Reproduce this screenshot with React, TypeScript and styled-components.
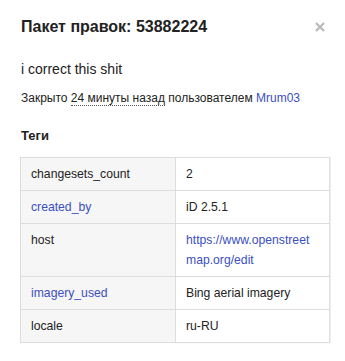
import { FC } from "react";
import styled, { createGlobalStyle } from "styled-components";

const GlobalStyle = createGlobalStyle`
  html, body {
    margin: 0;
    padding: 0;
    background: #fff;
  }
  body {
    font-family: "Liberation Sans", Arial, sans-serif;
    color: #222;
  }
`;

const tags: { key: string; value: string; keyLink?: boolean; valueLink?: boolean }[] = [
  { key: "changesets_count", value: "2" },
  { key: "created_by", value: "iD 2.5.1", keyLink: true },
  { key: "host", value: "https://www.openstreetmap.org/edit", valueLink: true },
  { key: "imagery_used", value: "Bing aerial imagery", keyLink: true },
  { key: "locale", value: "ru-RU" },
];

const App: FC = () => {
  return (
    <>
      <GlobalStyle />
      <Panel>
        <Header>
          <Title>Пакет правок: 53882224</Title>
          <Close aria-label="close">
            <svg width="10" height="10" viewBox="0 0 10 10">
              <path d="M1 1 L9 9 M9 1 L1 9" stroke="#bbb" strokeWidth="2.4" />
            </svg>
          </Close>
        </Header>
        <Comment>i correct this shit</Comment>
        <Meta>
          Закрыто <Abbr>24 минуты назад</Abbr> пользователем <Link>Mrum03</Link>
        </Meta>
        <Section>Теги</Section>
        <Table>
          <tbody>
            {tags.map((t) => (
              <tr key={t.key}>
                <KeyCell>{t.keyLink ? <Link>{t.key}</Link> : t.key}</KeyCell>
                <ValueCell>
                  {t.valueLink ? <Link>{t.value}</Link> : t.value}
                </ValueCell>
              </tr>
            ))}
          </tbody>
        </Table>
      </Panel>
    </>
  );
};

export default App;

const Panel = styled.div`
  width: 345px;
  height: 361px;
  box-sizing: border-box;
  padding: 16px 20px 0 21px;
`;

const Header = styled.div`
  display: flex;
  justify-content: space-between;
  align-items: center;
  height: 22px;
`;

const Title = styled.h2`
  margin: 0;
  font-size: 16px;
  font-weight: bold;
  color: #222;
`;

const Close = styled.span`
  display: flex;
  width: 10px;
  height: 10px;
`;

const Comment = styled.p`
  margin: 21px 0 0;
  font-size: 14px;
  line-height: 20px;
`;

const Meta = styled.p`
  margin: 10px 0 0;
  font-size: 12px;
  line-height: 18px;
`;

const Abbr = styled.span`
  border-bottom: 1px dotted #555;
`;

const Link = styled.a`
  color: #3b4fc1;
  text-decoration: none;
  cursor: pointer;
`;

const Section = styled.h4`
  margin: 20px 0 0;
  font-size: 13px;
  font-weight: bold;
  line-height: 18px;
`;

const Table = styled.table`
  margin: 12px 0 0 -1px;
  width: 310px;
  border-collapse: collapse;
  border: 1px solid #ddd;
  box-shadow: 1px 0 1px rgba(0, 0, 0, 0.06);
  font-size: 12.2px;
  table-layout: fixed;

  tr {
    border-bottom: 1px solid #ddd;
  }

  td {
    padding: 6px 10px;
    line-height: 20px;
    vertical-align: top;
  }
`;

const KeyCell = styled.td`
  width: 134px;
  background: #f6f6f6;
  border-right: 1px solid #ddd;
`;

const ValueCell = styled.td`
  background: #fff;
  word-break: break-all;
`;
